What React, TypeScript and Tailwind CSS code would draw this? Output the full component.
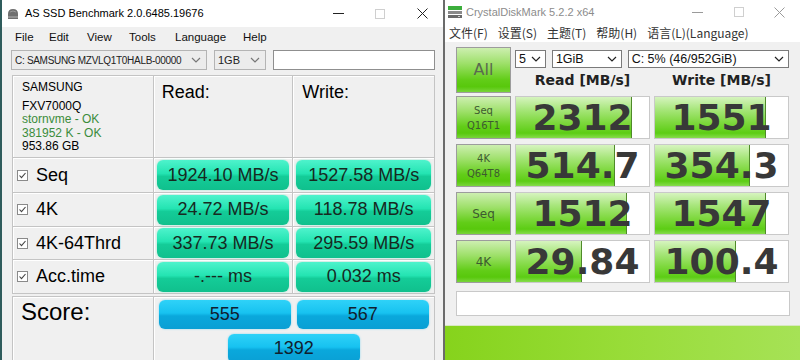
import React from "react";

const asRows = [
  { name: "Seq", read: "1924.10 MB/s", write: "1527.58 MB/s", h: "h-[35px]" },
  { name: "4K", read: "24.72 MB/s", write: "118.78 MB/s", h: "h-[34px]" },
  { name: "4K-64Thrd", read: "337.73 MB/s", write: "295.59 MB/s", h: "h-[33px]" },
  { name: "Acc.time", read: "-.--- ms", write: "0.032 ms", h: "h-[34px]" },
];

const cdmRows = [
  { label: ["Seq", "Q16T1"], read: "2312", rw: 116, write: "1551", ww: 111 },
  { label: ["4K", "Q64T8"], read: "514.7", rw: 99, write: "354.3", ww: 95 },
  { label: ["Seq"], read: "1512", rw: 111, write: "1547", ww: 111 },
  { label: ["4K"], read: "29.84", rw: 66, write: "100.4", ww: 81 },
];

function Chevron({ color = "#555" }: { color?: string }) {
  return (
    <svg width="10" height="6" viewBox="0 0 10 6">
      <path d="M1 1 L5 5 L9 1" fill="none" stroke={color} strokeWidth="1.2" />
    </svg>
  );
}

function Controls({ w, dim }: { w: string; dim?: boolean }) {
  const c = dim ? "#9a9a9a" : "#222";
  return (
    <div className="ml-auto flex h-full">
      <div className={`${w} flex items-center justify-center`}>
        <svg width="11" height="11" viewBox="0 0 11 11">
          <path d="M0 5.5 H11" stroke={c} strokeWidth="1" />
        </svg>
      </div>
      <div className={`${w} flex items-center justify-center`}>
        <svg width="10" height="10" viewBox="0 0 10 10">
          <rect x="0.5" y="0.5" width="9" height="9" fill="none" stroke="#cfcfcf" strokeWidth="1" />
        </svg>
      </div>
      <div className={`${w} flex items-center justify-center`}>
        <svg width="11" height="11" viewBox="0 0 11 11">
          <path d="M0.5 0.5 L10.5 10.5 M10.5 0.5 L0.5 10.5" stroke={c} strokeWidth="1" />
        </svg>
      </div>
    </div>
  );
}

function Check() {
  return (
    <svg width="11" height="11" viewBox="0 0 11 11" className="shrink-0">
      <rect x="0.5" y="0.5" width="10" height="10" fill="#fff" stroke="#8a8a8a" />
      <path d="M2.5 5.5 L4.5 7.7 L8.5 3" fill="none" stroke="#444" strokeWidth="1.1" />
    </svg>
  );
}

function GreenBar({ children }: { children: React.ReactNode }) {
  return (
    <div className="mx-[3px] h-[30px] rounded-[6px] bg-[linear-gradient(to_bottom,#4ef3cc_0%,#24e4b2_45%,#14cc98_55%,#10c08d_100%)] shadow-[0_0_2px_#8ae9cc] flex items-center justify-center text-[18px] text-[#17291f]">
      {children}
    </div>
  );
}

function BlueBar({ children }: { children: React.ReactNode }) {
  return (
    <div className="w-[132px] h-[29px] rounded-[6px] bg-[linear-gradient(to_bottom,#2fd2f8_0%,#17c2f0_45%,#0aa8dc_55%,#0a9fd4_100%)] shadow-[0_0_2px_#7fd4f0] flex items-center justify-center text-[18px] text-[#10202e]">
      {children}
    </div>
  );
}

function AsSsd() {
  const cell = "border-r border-b border-[#c4c4c4] shadow-[inset_1px_1px_0_#ffffff]";
  return (
    <div className="w-[443px] h-full shrink-0 flex flex-col border-l-2 border-[#2f5c5c] bg-[#f0f0f0] font-['Liberation_Sans',Arial,sans-serif] text-black">
      <div className="h-[27px] shrink-0 bg-white flex items-center">
        <svg className="ml-[4px]" width="14" height="12" viewBox="0 0 14 12">
          <path d="M2 11 L2 6 Q2 1 7 1 Q12 1 12 6 L12 11 Z" fill="#6f6f6f" />
          <path d="M2 9 H12" stroke="#b5b5b5" strokeWidth="1" />
          <path d="M4 4 Q7 2 10 4" stroke="#9a9a9a" strokeWidth="1" fill="none" />
        </svg>
        <span className="ml-[5px] text-[11px]">AS SSD Benchmark 2.0.6485.19676</span>
        <Controls w="w-[42px]" />
      </div>

      <div className="h-[22px] shrink-0 flex items-center pl-[13px] text-[11.5px] text-[#111]">
        <span className="w-[34px]">File</span>
        <span className="w-[38px]">Edit</span>
        <span className="w-[42px]">View</span>
        <span className="w-[46px]">Tools</span>
        <span className="w-[68px]">Language</span>
        <span>Help</span>
      </div>

      <div className="h-[26px] shrink-0 flex items-start pt-[1px] pl-[9px] gap-[7px]">
        <div className="w-[196px] h-[20px] border border-[#b4b4b4] bg-[#ececec] flex items-center pl-[3px] pr-[5px] text-[10px] tracking-[-0.3px] text-[#222]">
          <span className="whitespace-nowrap">C: SAMSUNG MZVLQ1T0HALB-00000</span>
          <span className="ml-auto"><Chevron color="#777" /></span>
        </div>
        <div className="w-[52px] h-[20px] border border-[#b4b4b4] bg-[#ececec] flex items-center pl-[3px] pr-[5px] text-[11px] text-[#222]">
          <span>1GB</span>
          <span className="ml-auto"><Chevron color="#777" /></span>
        </div>
        <div className="w-[162px] h-[20px] border border-[#8f8f8f] bg-white" />
      </div>

      <div className="ml-[10px] w-[423px] border-l border-t border-[#c4c4c4]">
        <div className="flex h-[82px]">
          <div className={`${cell} w-[141px] pl-[9px] pt-[5px] text-[12px] leading-[13.5px]`}>
            <div className="mb-[5px]">SAMSUNG</div>
            <div>FXV7000Q</div>
            <div className="text-[#3b8c3b]">stornvme - OK</div>
            <div className="text-[#3b8c3b]">381952 K - OK</div>
            <div>953.86 GB</div>
          </div>
          <div className={`${cell} w-[140px] pl-[8px] pt-[3px] text-[18px]`}>Read:</div>
          <div className={`${cell} w-[142px] pl-[9px] pt-[3px] text-[18px]`}>Write:</div>
        </div>
        {asRows.map((r) => (
          <div key={r.name} className={`flex ${r.h}`}>
            <div className={`${cell} w-[141px] flex items-center pl-[4px] gap-[8px] text-[18px]`}>
              <Check />
              <span>{r.name}</span>
            </div>
            <div className={`${cell} w-[140px] flex flex-col justify-center`}>
              <GreenBar>{r.read}</GreenBar>
            </div>
            <div className={`${cell} w-[142px] flex flex-col justify-center`}>
              <GreenBar>{r.write}</GreenBar>
            </div>
          </div>
        ))}
      </div>

      <div className="ml-[10px] w-[423px] mt-[2px] flex-1 flex border-l border-t border-[#c4c4c4]">
        <div className={`${cell} w-[141px] pl-[8px] pt-[2px] text-[24px] leading-[26px]`}>Score:</div>
        <div className={`${cell} w-[282px] flex flex-col items-center pt-[3px] gap-[5px]`}>
          <div className="flex gap-[6px]">
            <BlueBar>555</BlueBar>
            <BlueBar>567</BlueBar>
          </div>
          <BlueBar>1392</BlueBar>
        </div>
      </div>
    </div>
  );
}

const greenBtn =
  "border border-[#9c9c9c] bg-[linear-gradient(to_bottom,#cdefb0_0%,#9ee06a_35%,#62cd18_72%,#58c80c_88%,#78d43a_100%)]";

function Select({ w, text }: { w: string; text: string }) {
  return (
    <div className={`${w} h-[18px] border border-[#7a7a7a] bg-white flex items-center pl-[3px] pr-[4px] text-[12.5px] text-[#111]`}>
      <span>{text}</span>
      <span className="ml-auto"><Chevron color="#222" /></span>
    </div>
  );
}

function CdmCell({ value, fill }: { value: string; fill: number }) {
  return (
    <div className="relative w-[135px] h-[43px] border border-[#c9c9c9] bg-white overflow-hidden">
      <div
        className="absolute left-0 top-0 bottom-0 border-r border-[#4f8a2a] bg-[linear-gradient(to_bottom,#d6f4bf_0%,#a8e67c_30%,#7ed83e_62%,#5ccd14_88%,#86dc4c_100%)]"
        style={{ width: fill }}
      />
      <div className="relative h-full flex items-center justify-center font-['DejaVu_Sans',Verdana,sans-serif] font-bold text-[36px] leading-none text-[#383838]">
        {value}
      </div>
    </div>
  );
}

function Cdm() {
  return (
    <div className="flex-1 h-full flex flex-col bg-[#f0f0f0] font-['Liberation_Sans',Arial,sans-serif]">
      <div className="h-[24px] shrink-0 bg-white flex items-center">
        <svg className="ml-[2px]" width="16" height="16" viewBox="0 0 16 16">
          <rect x="1" y="2" width="14" height="4" fill="#3cae3c" />
          <rect x="1" y="7" width="14" height="3" fill="#8a8a8a" />
          <rect x="1" y="11" width="14" height="3" fill="#6a6a6a" />
          <rect x="11" y="12" width="2" height="1" fill="#cfcfcf" />
        </svg>
        <span className="ml-[3px] text-[11px] text-[#8c8c8c]">CrystalDiskMark 5.2.2 x64</span>
        <Controls w="w-[41px]" dim />
      </div>

      <div className="h-[18px] shrink-0 bg-white flex items-center gap-[10px] pl-[4px] text-[12px] text-[#333] font-['Noto_Sans_CJK_SC','Liberation_Sans',sans-serif]">
        <span>文件(F)</span>
        <span>设置(S)</span>
        <span>主题(T)</span>
        <span>帮助(H)</span>
        <span>语言(L)(Language)</span>
      </div>

      <div className="h-[283px] shrink-0 pl-[11px] pt-[5px] flex flex-col">
        <div className="flex h-[46px] gap-[4px]">
          <div className={`${greenBtn} w-[55px] h-[46px] flex items-center justify-center text-[16px] text-[#5a6a50] font-['DejaVu_Sans',sans-serif]`}>
            All
          </div>
          <div className="flex flex-col w-[274px]">
            <div className="flex gap-[6px] mt-[3px]">
              <Select w="w-[31px]" text="5" />
              <Select w="w-[70px]" text="1GiB" />
              <Select w="w-[162px]" text="C: 5% (46/952GiB)" />
            </div>
            <div className="flex flex-1 items-center gap-[4px] font-['DejaVu_Sans',Verdana,sans-serif] font-bold text-[14px] text-[#222]">
              <div className="w-[135px] text-center">Read [MB/s]</div>
              <div className="w-[135px] text-center">Write [MB/s]</div>
            </div>
          </div>
        </div>

        <div className="mt-[3px] flex flex-col gap-[5px]">
          {cdmRows.map((r, i) => (
            <div key={i} className="flex gap-[4px]">
              <div className={`${greenBtn} w-[55px] h-[43px] flex flex-col items-center justify-center font-['DejaVu_Sans',sans-serif] text-[#3d5a30] ${r.label.length > 1 ? "text-[10px] leading-[15px]" : "text-[12px]"}`}>
                {r.label.map((l) => (
                  <span key={l}>{l}</span>
                ))}
              </div>
              <CdmCell value={r.read} fill={r.rw} />
              <CdmCell value={r.write} fill={r.ww} />
            </div>
          ))}
        </div>

        <div className="mt-[8px] w-[334px] h-[25px] border border-[#c9c9c9] bg-white" />
      </div>

      <div className="flex-1 border-t border-[#d8e8c0] bg-[linear-gradient(to_right,#86d31c_0%,#98dc38_50%,#a6e256_100%)]" />
    </div>
  );
}

export default function App() {
  return (
    <div className="w-[800px] h-[360px] flex overflow-hidden bg-white">
      <AsSsd />
      <div className="w-[2px] h-full shrink-0 bg-[#6b6b6b]" />
      <Cdm />
    </div>
  );
}
